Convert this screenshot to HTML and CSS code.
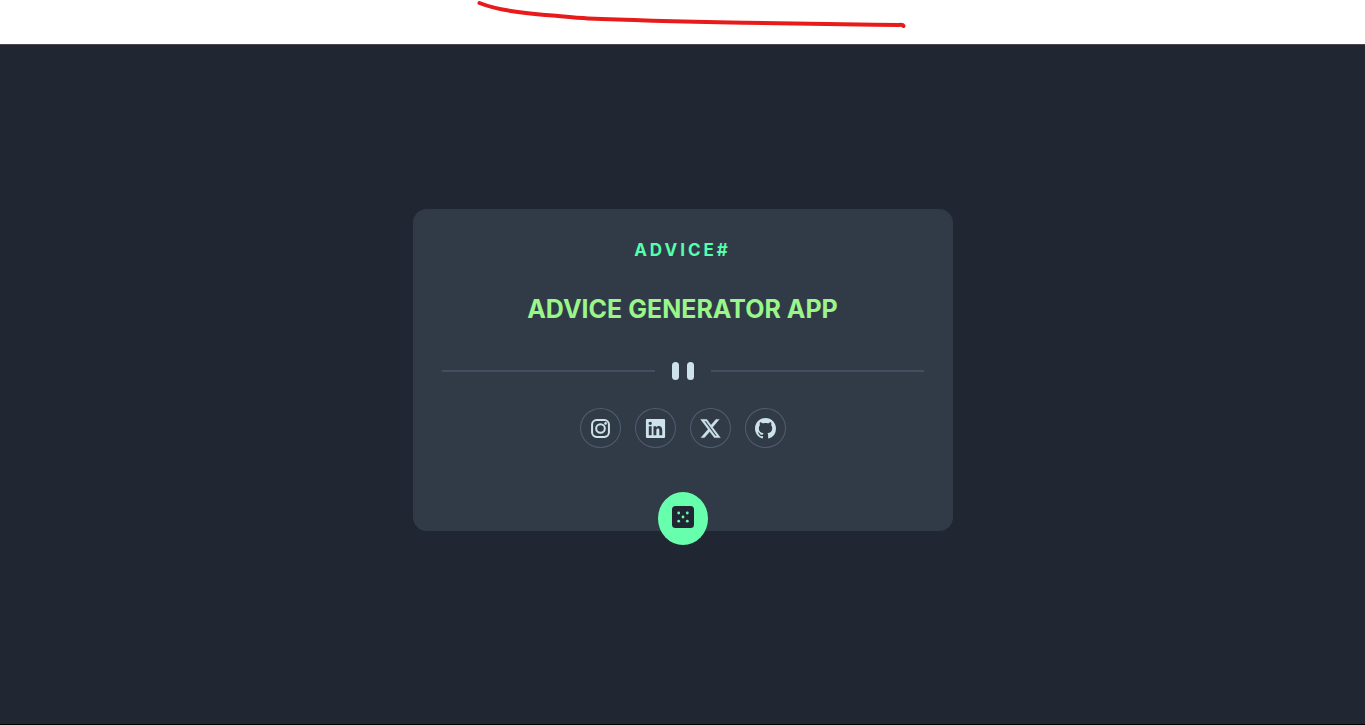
FILE: index.html
```html
<!DOCTYPE html>
<html lang="en">
<head>
<meta charset="utf-8">
<meta name="viewport" content="width=device-width, initial-scale=1">
<title>Advice Generator App</title>
<link rel="stylesheet" href="styles.css">
</head>
<body>
<header class="top">
  <svg class="stroke" viewBox="0 0 430 30" aria-hidden="true"><path d="M4.500 3C22 10 45 13 81 15.800C94 17 103 17.900 113 18.400C165 20.500 220 21.700 270 22.800L400 24.800L424 24.900Q428 24.600 428.500 26"/></svg>
</header>
<main class="stage">
  <article class="card">
    <p class="label">ADVICE#</p>
    <h1 class="title">ADVICE GENERATOR APP</h1>
    <div class="divider"><span class="line"></span><span class="bar"></span><span class="bar"></span><span class="line"></span></div>
    <nav class="social" aria-label="Social links">
      <a class="social-link" href="#" aria-label="Instagram"><svg class="icon" viewBox="0 0 24 24"><rect x="3.200" y="3.200" width="17.600" height="17.600" rx="4.800" fill="none" stroke="currentColor" stroke-width="2.100"/><circle cx="12" cy="12" r="4.500" fill="none" stroke="currentColor" stroke-width="2.100"/><circle cx="17.300" cy="6.700" r="1.400"/></svg></a>
      <a class="social-link" href="#" aria-label="LinkedIn"><svg class="icon" viewBox="0 0 24 24"><path fill-rule="evenodd" d="M3.200 2H20.800Q22 2 22 3.200V20.800Q22 22 20.800 22H3.200Q2 22 2 20.800V3.200Q2 2 3.200 2ZM8 19V9.700H5V19ZM6.500 8.400A1.750 1.750 0 1 0 6.500 4.900A1.750 1.750 0 1 0 6.500 8.400ZM19 19V13.900C19 11.100 17.500 9.500 15.500 9.500C14.200 9.500 13.300 10.200 12.800 11V9.700H9.900V19H12.900V14C12.900 12.800 13.500 12.100 14.500 12.100C15.500 12.100 16 12.800 16 14V19Z"/></svg></a>
      <a class="social-link" href="#" aria-label="X"><svg class="icon" viewBox="0 0 24 24"><path fill-rule="evenodd" d="M8.200 2.500H1.800L9.600 12.900L2.200 21.500H5.600L11.200 15.100L16 21.500H22.200L14.100 10.700L21 2.500H17.700L12.500 8.500ZM17 19.700L5.400 4.200H7.300L18.800 19.700Z" stroke="currentColor" stroke-width=".5"/></svg></a>
      <a class="social-link" href="#" aria-label="GitHub"><svg class="icon github" viewBox="0 0 16 16"><path d="M8 0C3.580 0 0 3.580 0 8c0 3.540 2.290 6.530 5.470 7.590.4.070.55-.17.55-.38 0-.19-.01-.82-.01-1.490-2.010.37-2.530-.49-2.690-.94-.09-.23-.48-.94-.82-1.130-.28-.15-.68-.52-.01-.53.63-.01 1.080.58 1.230.82.72 1.210 1.870.87 2.330.66.070-.52.28-.87.51-1.070-1.780-.2-3.640-.89-3.640-3.950 0-.87.31-1.590.82-2.150-.08-.2-.36-1.020.08-2.120 0 0 .67-.21 2.200.82.64-.18 1.320-.27 2-.27s1.360.09 2 .27c1.530-1.040 2.200-.82 2.200-.82.44 1.100.16 1.920.08 2.120.51.56.82 1.270.82 2.150 0 3.070-1.870 3.750-3.650 3.950.29.25.54.73.54 1.480 0 1.070-.01 1.930-.01 2.200 0 .21.15.46.55.38A8.010 8.010 0 0 0 16 8c0-4.420-3.580-8-8-8Z"/></svg></a>
    </nav>
    <button class="dice" type="button" aria-label="New advice"><svg class="dice-icon" viewBox="0 0 22 22"><rect width="22" height="22" rx="3.500" fill="#202733"/><g fill="#67ffad"><circle cx="6.700" cy="7" r="1.400"/><circle cx="15.300" cy="7" r="1.400"/><circle cx="11" cy="11" r="1.400"/><circle cx="6.700" cy="15.200" r="1.400"/><circle cx="15.300" cy="15.200" r="1.400"/></g></svg></button>
  </article>
</main>
</body>
</html>
```
FILE: styles.css
```css
* { box-sizing: border-box; }
body {
  margin: 0;
  min-height: 100vh;
  display: flex;
  flex-direction: column;
  background: #fff;
  font-family: Inter, "Liberation Sans", sans-serif;
}
.top {
  height: 44px;
  padding-left: 35%;
}
.stroke {
  display: block;
  width: 430px;
  height: 30px;
  margin-left: -3px;
  overflow: visible;
  fill: none;
  stroke: #e81b1b;
  stroke-width: 4;
  stroke-linecap: round;
  stroke-linejoin: round;
}
.stage {
  flex: 1;
  display: flex;
  align-items: center;
  justify-content: center;
  padding: 24px 16px 53px;
  background: #202733;
  border-top: 1px solid #51434c;
  border-bottom: 1px solid #000;
}
.card {
  width: 100%;
  max-width: 540px;
  padding: 30px 29px 0;
  display: flex;
  flex-direction: column;
  align-items: center;
  background: #313b47;
  border-radius: 14px;
}
.label {
  margin: 0;
  font-size: 17px;
  line-height: 22px;
  font-weight: 700;
  letter-spacing: 3px;
  color: #54ffad;
}
.title {
  margin: 30px 0 0;
  font-size: 25px;
  line-height: 36px;
  font-weight: 700;
  color: #9af58b;
}
.divider {
  width: 100%;
  margin-top: 35px;
  display: flex;
  align-items: center;
  gap: 8px;
}
.line {
  flex: 1;
  height: 2px;
  background: #434f60;
}
.line:first-child { margin-right: 9px; }
.line:last-child { margin-left: 9px; }
.bar {
  width: 7px;
  height: 18px;
  border-radius: 4px;
  background: #cee3e9;
}
.social {
  display: flex;
  gap: 14px;
  margin-top: 28px;
}
.social-link {
  width: 41px;
  height: 40px;
  display: flex;
  align-items: center;
  justify-content: center;
  border: 1px solid #4f5d74;
  border-radius: 50%;
  color: #cee3e9;
}
.icon {
  width: 23px;
  height: 23px;
  fill: currentColor;
}
.github {
  width: 21px;
  height: 21px;
}
.dice {
  width: 50px;
  height: 53px;
  margin: 44px 0 -14px;
  padding: 0 0 3px;
  display: flex;
  align-items: center;
  justify-content: center;
  border: 0;
  border-radius: 50%;
  background: #67ffad;
  cursor: pointer;
}
.dice-icon {
  width: 22px;
  height: 22px;
}
```
